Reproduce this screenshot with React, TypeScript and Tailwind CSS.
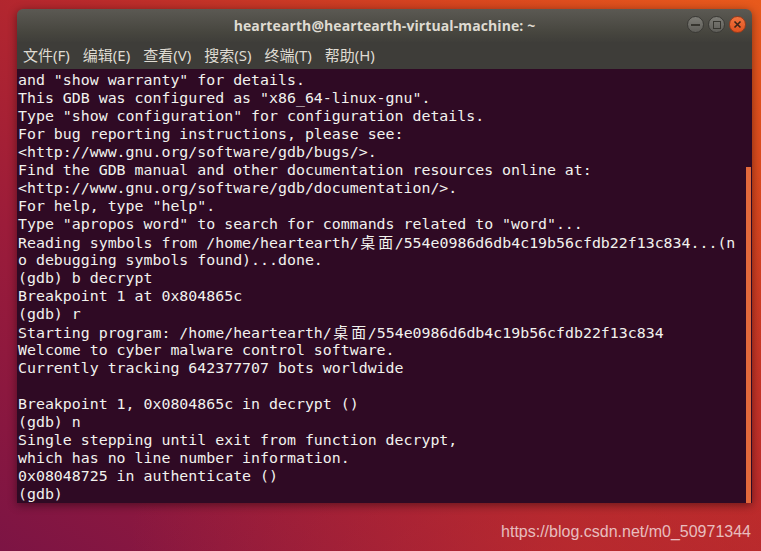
import React from "react";

const Cjk = ({ t }: { t: string }) => (
  <>
    {t.split("").map((c, i) => (
      <span
        key={i}
        className="inline-block w-[18px] text-center"
        style={{ fontFamily: '"Noto Sans CJK SC", sans-serif' }}
      >
        {c}
      </span>
    ))}
  </>
);

const lines: React.ReactNode[] = [
  'and "show warranty" for details.',
  'This GDB was configured as "x86_64-linux-gnu".',
  'Type "show configuration" for configuration details.',
  "For bug reporting instructions, please see:",
  "<http://www.gnu.org/software/gdb/bugs/>.",
  "Find the GDB manual and other documentation resources online at:",
  "<http://www.gnu.org/software/gdb/documentation/>.",
  'For help, type "help".',
  'Type "apropos word" to search for commands related to "word"...',
  <>
    Reading symbols from /home/heartearth/
    <Cjk t="桌面" />
    /554e0986d6db4c19b56cfdb22f13c834...(n
  </>,
  "o debugging symbols found)...done.",
  "(gdb) b decrypt",
  "Breakpoint 1 at 0x804865c",
  "(gdb) r",
  <>
    Starting program: /home/heartearth/
    <Cjk t="桌面" />
    /554e0986d6db4c19b56cfdb22f13c834
  </>,
  "Welcome to cyber malware control software.",
  "Currently tracking 642377707 bots worldwide",
  "",
  "Breakpoint 1, 0x0804865c in decrypt ()",
  "(gdb) n",
  "Single stepping until exit from function decrypt,",
  "which has no line number information.",
  "0x08048725 in authenticate ()",
  "(gdb) ",
];

const menus = ["文件(F)", "编辑(E)", "查看(V)", "搜索(S)", "终端(T)", "帮助(H)"];

export default function App() {
  return (
    <div className="relative w-[761px] h-[551px] overflow-hidden bg-[linear-gradient(to_top_right,#7c1444_0%,#9c1c3a_30%,#b8292c_55%,#d8461f_80%,#e85a1c_100%)]">
      <div className="absolute inset-0 bg-[radial-gradient(ellipse_at_75%_105%,rgba(200,50,40,0.55),transparent_55%)]" />
      <div className="relative pt-[9px] pl-[17px]">
        <div className="w-[735px] flex flex-col rounded-t-[6px] overflow-hidden shadow-[0_2px_10px_rgba(0,0,0,0.45)]">
          {/* title bar */}
          <div className="relative h-[33px] flex items-center justify-center bg-[linear-gradient(to_bottom,#5b5953,#47463f_70%,#3f3e3a)]">
            <span
              className="text-[14px] font-bold text-[#dfdbd2] tracking-[0.1px]"
              style={{ fontFamily: '"Open Sans", "Noto Sans", sans-serif' }}
            >
              heartearth@heartearth-virtual-machine: ~
            </span>
            <div className="absolute right-[6px] top-[7px] flex gap-[4px]">
              <div className="w-[17px] h-[17px] rounded-full border border-[#3a3935] bg-[linear-gradient(to_bottom,#7d7c76,#5e5d58)] flex items-center justify-center">
                <div className="w-[9px] h-[2px] bg-[#36352f]" />
              </div>
              <div className="w-[17px] h-[17px] rounded-full border border-[#3a3935] bg-[linear-gradient(to_bottom,#7d7c76,#5e5d58)] flex items-center justify-center">
                <div className="w-[8px] h-[8px] border-[1.5px] border-[#36352f]" />
              </div>
              <div className="w-[17px] h-[17px] rounded-full border border-[#9a3a1a] bg-[linear-gradient(to_bottom,#f2743f,#e0521f)] flex items-center justify-center">
                <svg width="9" height="9" viewBox="0 0 9 9">
                  <path d="M1.5 1.5L7.5 7.5M7.5 1.5L1.5 7.5" stroke="#3b2418" strokeWidth="1.6" />
                </svg>
              </div>
            </div>
          </div>
          {/* menu bar */}
          <div
            className="h-[27px] flex items-center gap-[13px] pl-[6px] bg-[#3e3d39] text-[15px] text-[#dfdbd2]"
            style={{ fontFamily: '"Noto Sans", "Noto Sans CJK SC", sans-serif' }}
          >
            {menus.map((m) => (
              <span key={m} className="leading-none">
                {m}
              </span>
            ))}
          </div>
          {/* terminal */}
          <div className="relative h-[434px] bg-[#2f0a24] pt-[2px] pl-[1px]">
            <div
              className="text-[14.9px] leading-[18px] text-[#f2f2ee] whitespace-pre"
              style={{ fontFamily: '"DejaVu Sans Mono", monospace' }}
            >
              {lines.map((l, i) => (
                <div key={i} className="h-[18px]">
                  {l === "" ? " " : l}
                </div>
              ))}
            </div>
            <div className="absolute right-[1px] top-[98px] bottom-0 w-[5px] bg-[#e3693c]" />
          </div>
        </div>
      </div>
      <div
        className="absolute right-[10px] bottom-[11px] text-[16px] leading-none text-[rgba(255,255,255,0.7)]"
        style={{ fontFamily: '"Liberation Sans", Arial, sans-serif' }}
      >
        https://blog.csdn.net/m0_50971344
      </div>
    </div>
  );
}
